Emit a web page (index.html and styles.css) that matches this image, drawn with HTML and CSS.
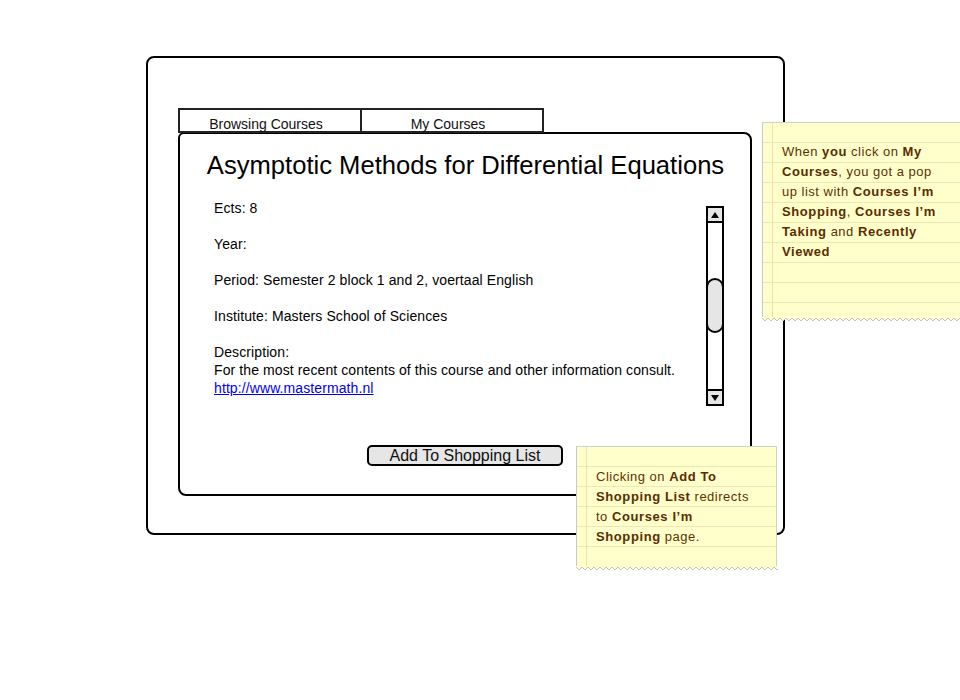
FILE: index.html
```html
<!DOCTYPE html>
<html>
<head>
<meta charset="utf-8">
<link rel="stylesheet" href="styles.css">
</head>
<body>
<div class="stage">
  <div class="window">
    <div class="tabs">
      <div class="tab">Browsing Courses</div>
      <div class="tab">My Courses</div>
    </div>
    <div class="panel">
      <h1 class="title">Asymptotic Methods for Differential Equations</h1>
      <div class="content">
        <div class="details">
          <p>Ects: 8</p>
          <p>Year:</p>
          <p>Period: Semester 2 block 1 and 2, voertaal English</p>
          <p>Institute: Masters School of Sciences</p>
          <p>Description:<br>For the most recent contents of this course and other information consult.<br><a href="#">http://www.mastermath.nl</a></p>
        </div>
        <div class="scrollbar">
          <div class="arrow up"><svg width="10" height="8" viewBox="0 0 10 8"><path d="M1 7 L5 1 L9 7 Z" fill="#000"/></svg></div>
          <div class="track"><div class="thumb"></div></div>
          <div class="arrow down"><svg width="10" height="8" viewBox="0 0 10 8"><path d="M1 1 L5 7 L9 1 Z" fill="#000"/></svg></div>
        </div>
      </div>
      <div class="actions">
        <button class="btn">Add To Shopping List</button>
      </div>
    </div>
  </div>

  <div class="note note-one">
    <p>When <b>you</b> click on <b>My Courses</b>, you got a pop up list with <b>Courses I’m Shopping</b>, <b>Courses I’m Taking</b> and <b>Recently Viewed</b></p>
    <svg class="zigzag" width="202" height="5" viewBox="0 0 202 5">
      <defs><pattern id="zz1" patternUnits="userSpaceOnUse" width="6" height="5"><path d="M0 0 L0 1 L3 4 L6 1 L6 0 Z" fill="#ffffcc"/><path d="M0 1 L3 4 L6 1" fill="none" stroke="#c4c4c4" stroke-width="1"/></pattern></defs>
      <rect x="0" y="0" width="202" height="5" fill="url(#zz1)"/>
    </svg>
  </div>
  <div class="note note-two">
    <p>Clicking on <b>Add To Shopping List</b> redirects to <b>Courses I’m Shopping</b> page.</p>
    <svg class="zigzag" width="202" height="5" viewBox="0 0 202 5">
      <defs><pattern id="zz2" patternUnits="userSpaceOnUse" width="6" height="5"><path d="M0 0 L0 1 L3 4 L6 1 L6 0 Z" fill="#ffffcc"/><path d="M0 1 L3 4 L6 1" fill="none" stroke="#c4c4c4" stroke-width="1"/></pattern></defs>
      <rect x="0" y="0" width="202" height="5" fill="url(#zz2)"/>
    </svg>
  </div>
</div>
</body>
</html>
```

FILE: styles.css
```css
* { box-sizing: border-box; }
html, body { margin: 0; padding: 0; background: #fff; }
body { font-family: "Liberation Sans", Arial, sans-serif; color: #000; }

.stage {
  position: relative;
  width: 960px;
  height: 700px;
  overflow: hidden;
  padding: 56px 0 0 146px;
}

.window {
  width: 639px;
  height: 479px;
  border: 2px solid #000;
  border-radius: 8px;
  padding: 50px 0 0 30px;
}

.tabs {
  display: flex;
  height: 25px;
  margin-bottom: -1px;
}
.tab {
  width: 184px;
  height: 25px;
  border: 2px solid #222;
  font-size: 14px;
  text-align: center;
  padding-top: 6px;
  padding-right: 8px;
  line-height: 16px;
  color: #111;
}
.tab + .tab { margin-left: -2px; }

.panel {
  width: 574px;
  height: 364px;
  border: 2px solid #000;
  border-radius: 8px;
  border-top-left-radius: 6px;
  padding: 16px 26px 0 34px;
  display: flex;
  flex-direction: column;
}

.title {
  margin: 0;
  font-weight: normal;
  font-size: 25.6px;
  line-height: 30px;
  text-align: center;
  margin-left: -11px;
  margin-right: -4px;
  white-space: nowrap;
}

.content {
  display: flex;
  justify-content: space-between;
  margin-top: 17px;
}
.details {
  font-size: 14px;
  line-height: 18px;
  letter-spacing: 0.1px;
  padding-top: 2px;
}
.details p { margin: 0 0 18px 0; }
.details a { color: #0000ee; text-decoration: underline; }

.scrollbar {
  width: 18px;
  height: 200px;
  border: 2px solid #000;
  display: flex;
  flex-direction: column;
  margin-top: 9px;
  background: #fff;
}
.arrow {
  height: 15px;
  background: #e6e6e6;
  display: flex;
  align-items: center;
  justify-content: center;
}
.arrow.up { border-bottom: 2px solid #000; }
.arrow.down { border-top: 2px solid #000; }
.track {
  flex: 1;
  padding-top: 55px;
  margin: 0 -2px;
}
.thumb {
  height: 55px;
  background: #e6e6e6;
  border: 2px solid #000;
  border-radius: 9px;
}

.actions {
  display: flex;
  justify-content: center;
  margin-top: 30px;
  margin-left: -8px;
}
.btn {
  width: 196px;
  height: 21px;
  border: 2px solid #000;
  border-radius: 5px;
  background: #e6e6e6;
  font-family: "Liberation Sans", Arial, sans-serif;
  font-size: 16px;
  line-height: 17px;
  padding: 0;
  color: #111;
}

/* sticky notes */
.note {
  position: absolute;
  background-color: #ffffcc;
  background-image:
    linear-gradient(90deg, transparent 9px, #f7dcb0 9px, #f7dcb0 10px, transparent 10px),
    repeating-linear-gradient(180deg, transparent 0, transparent 19px, #eee7b0 19px, #eee7b0 20px);
  border-left: 1px solid #c8c8c8;
  border-top: 1px solid #d0d0d0;
  border-right: 1px solid #d0d0d0;
  color: #5c3300;
  font-family: "Liberation Sans", Arial, sans-serif;
  font-size: 13px;
  line-height: 20px;
  letter-spacing: 0.5px;
}
.note p { margin: 0; }
.note b { color: #5a2d00; letter-spacing: 0.6px; }
.zigzag {
  position: absolute;
  left: -1px;
  bottom: -5px;
  display: block;
}

.note-one {
  left: 762px;
  top: 122px;
  width: 200px;
  height: 195px;
  padding: 19px 14px 0 19px;
}
.note-two {
  left: 576px;
  top: 446px;
  width: 201px;
  height: 120px;
  padding: 20px 18px 0 19px;
}
```
